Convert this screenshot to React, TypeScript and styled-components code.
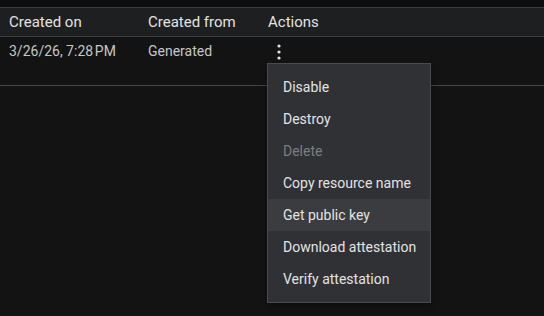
import React from 'react';
import styled, { createGlobalStyle } from 'styled-components';

const GlobalStyle = createGlobalStyle`
    html, body {
        margin: 0;
        padding: 0;
        background: #131314;
        font-family: Roboto, "Liberation Sans", sans-serif;
        overflow: hidden;
    }
`;

const menuItems = [
    { label: 'Disable' },
    { label: 'Destroy' },
    { label: 'Delete', disabled: true },
    { label: 'Copy resource name' },
    { label: 'Get public key', active: true },
    { label: 'Download attestation' },
    { label: 'Verify attestation' },
];

const KebabIcon = () => (
    <svg width="4" height="16" viewBox="0 0 4 16">
        <circle cx="2" cy="2" r="1.6" fill="#e3e3e3" />
        <circle cx="2" cy="8" r="1.6" fill="#e3e3e3" />
        <circle cx="2" cy="14" r="1.6" fill="#e3e3e3" />
    </svg>
);

export default function App() {
    return (
        <Page>
            <GlobalStyle />
            <TopStrip />
            <Table>
                <HeaderRow>
                    <Cell>Created on</Cell>
                    <Cell>Created from</Cell>
                    <Cell>Actions</Cell>
                </HeaderRow>
                <BodyRow>
                    <Cell>3/26/26, 7:28&#8239;PM</Cell>
                    <Cell>Generated</Cell>
                    <ActionCell>
                        <KebabButton>
                            <KebabIcon />
                        </KebabButton>
                        <Menu>
                            {menuItems.map((item) => (
                                <MenuItem key={item.label} $disabled={item.disabled} $active={item.active}>
                                    {item.label}
                                </MenuItem>
                            ))}
                        </Menu>
                    </ActionCell>
                </BodyRow>
            </Table>
        </Page>
    );
}

const Page = styled.div`
    width: 544px;
    height: 316px;
    background: #131314;
`;

const TopStrip = styled.div`
    height: 7px;
    background: #0e0e0f;
`;

const Table = styled.div`
    border-top: 1px solid #3c3d3f;
`;

const HeaderRow = styled.div`
    display: grid;
    grid-template-columns: 139px 120px 1fr;
    height: 28px;
    align-items: center;
    padding-left: 9px;
    background: #1e1f20;
    border-bottom: 1px solid #3c3d3f;
    color: #e3e3e3;
    font-size: 15px;
`;

const BodyRow = styled.div`
    display: grid;
    grid-template-columns: 139px 120px 1fr;
    height: 48px;
    padding-left: 9px;
    border-bottom: 1px solid #444547;
    color: #c4c7c5;
    font-size: 14px;
`;

const Cell = styled.div`
    line-height: 28px;
    white-space: nowrap;
`;

const ActionCell = styled.div`
    position: relative;
`;

const KebabButton = styled.div`
    display: flex;
    align-items: center;
    height: 16px;
    padding: 7px 0 0 9px;
`;

const Menu = styled.div`
    position: absolute;
    top: 26px;
    left: -1px;
    width: 162px;
    padding: 7px 0;
    background: #303134;
    border: 1px solid #4a4b4e;
    box-shadow: 0 2px 6px rgba(0, 0, 0, 0.4);
    z-index: 2;
`;

const MenuItem = styled.div<{ $disabled?: boolean; $active?: boolean }>`
    height: 32px;
    line-height: 32px;
    padding-left: 15px;
    font-size: 14px;
    white-space: nowrap;
    color: ${(p) => (p.$disabled ? '#7c7d80' : '#e3e3e3')};
    background: ${(p) => (p.$active ? '#3b3c3f' : 'transparent')};
`;
